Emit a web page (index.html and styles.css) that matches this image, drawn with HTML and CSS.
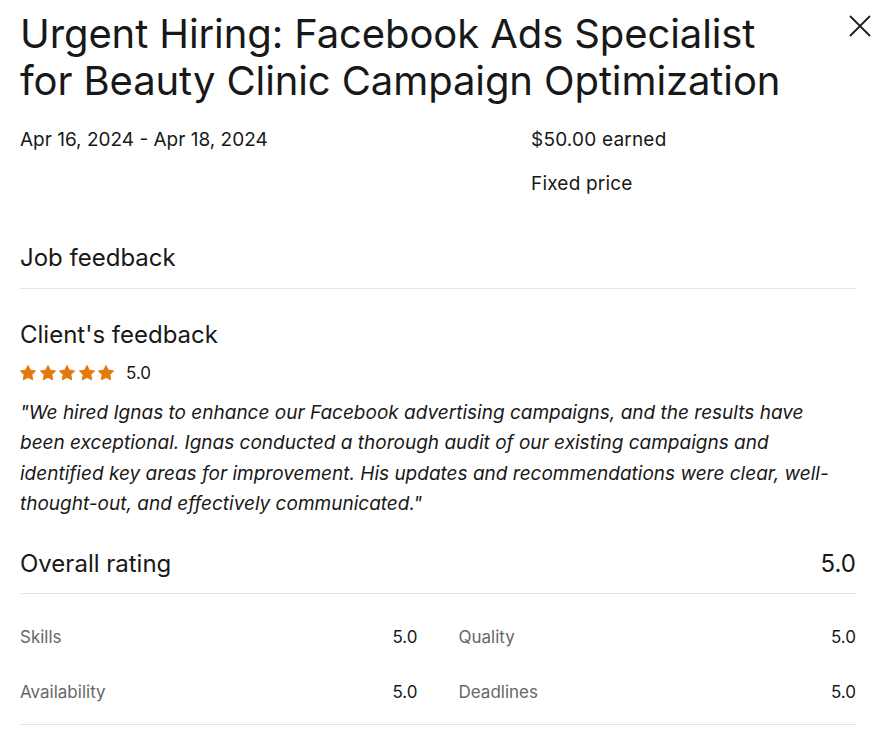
FILE: index.html
```html
<!DOCTYPE html>
<html>
<head>
<meta charset="utf-8">
<link rel="stylesheet" href="styles.css">
</head>
<body>
<div class="modal">
  <header class="head">
    <h1 class="title">Urgent Hiring: Facebook Ads Specialist for Beauty Clinic Campaign Optimization</h1>
    <button class="close" aria-label="Close">
      <svg width="22" height="22" viewBox="0 0 22 22"><path d="M1 1L21 21M21 1L1 21" stroke="#1f1f1f" stroke-width="1.8" fill="none"/></svg>
    </button>
  </header>
  <div class="meta">
    <div class="meta-left">Apr 16, 2024 - Apr 18, 2024</div>
    <div class="meta-right">
      <div>$50.00 earned</div>
      <div class="price-type">Fixed price</div>
    </div>
  </div>
  <h2 class="section">Job feedback</h2>
  <div class="client">
    <h3 class="client-title">Client's feedback</h3>
    <div class="stars-row">
      <span class="stars">
        <svg viewBox="0 0 20 20"><path d="M10 .5L12.94 6.45 19.51 7.41 14.76 12.05 15.88 18.59 10 15.5 4.12 18.59 5.24 12.05 .49 7.41 7.06 6.45Z"/></svg>
        <svg viewBox="0 0 20 20"><path d="M10 .5L12.94 6.45 19.51 7.41 14.76 12.05 15.88 18.59 10 15.5 4.12 18.59 5.24 12.05 .49 7.41 7.06 6.45Z"/></svg>
        <svg viewBox="0 0 20 20"><path d="M10 .5L12.94 6.45 19.51 7.41 14.76 12.05 15.88 18.59 10 15.5 4.12 18.59 5.24 12.05 .49 7.41 7.06 6.45Z"/></svg>
        <svg viewBox="0 0 20 20"><path d="M10 .5L12.94 6.45 19.51 7.41 14.76 12.05 15.88 18.59 10 15.5 4.12 18.59 5.24 12.05 .49 7.41 7.06 6.45Z"/></svg>
        <svg viewBox="0 0 20 20"><path d="M10 .5L12.94 6.45 19.51 7.41 14.76 12.05 15.88 18.59 10 15.5 4.12 18.59 5.24 12.05 .49 7.41 7.06 6.45Z"/></svg>
      </span>
      <span class="score">5.0</span>
    </div>
    <p class="quote">"We hired Ignas to enhance our Facebook advertising campaigns, and the results have been exceptional. Ignas conducted a thorough audit of our existing campaigns and identified key areas for improvement. His updates and recommendations were clear, well-thought-out, and effectively communicated."</p>
  </div>
  <div class="overall">
    <span>Overall rating</span>
    <span>5.0</span>
  </div>
  <div class="grid">
    <div class="cell"><span class="label">Skills</span><span class="val">5.0</span></div>
    <div class="cell"><span class="label">Quality</span><span class="val">5.0</span></div>
    <div class="cell"><span class="label">Availability</span><span class="val">5.0</span></div>
    <div class="cell"><span class="label">Deadlines</span><span class="val">5.0</span></div>
  </div>
</div>
</body>
</html>
```

FILE: styles.css
```css
html, body {
  margin: 0;
  padding: 0;
  background: #fff;
}
body {
  font-family: Inter, "Liberation Sans", Arial, sans-serif;
  color: #181818;
}
.modal {
  padding: 0 33px 0 20px;
}
.head {
  display: flex;
  justify-content: space-between;
  align-items: flex-start;
  padding-top: 10px;
}
.title {
  flex: 0 1 780px;
  margin: 0;
  font-size: 40px;
  line-height: 47px;
  font-weight: 400;
  letter-spacing: -0.1px;
}
.close {
  flex: none;
  border: 0;
  background: none;
  padding: 0;
  margin: 5px -15px 0 0;
  width: 22px;
  height: 22px;
  cursor: pointer;
}
.close svg { display: block; }
.meta {
  display: flex;
  margin-top: 25px;
  font-size: 19px;
  line-height: 22px;
}
.meta-left {
  width: 511px;
}
.meta-right {
  letter-spacing: 0.2px;
}
.price-type {
  margin-top: 22px;
}
.section {
  margin: 48px 0 0;
  font-size: 24px;
  font-weight: 400;
  line-height: 30px;
  padding-bottom: 15px;
  border-bottom: 1px solid #e4e4e4;
}
.client-title {
  margin: 31px 0 0;
  font-size: 24px;
  font-weight: 400;
  line-height: 30px;
}
.stars-row {
  display: flex;
  align-items: center;
  height: 20px;
  margin-top: 13px;
  font-size: 17px;
}
.stars {
  display: flex;
  gap: 3.5px;
}
.stars svg {
  display: block;
  width: 16px;
  height: 16px;
  fill: #e3790c;
  stroke: #e3790c;
  stroke-width: 1.2;
  stroke-linejoin: round;
}
.score {
  margin-left: 12px;
}
.quote {
  max-width: 830px;
  margin: 15px 0 0;
  font-style: italic;
  font-size: 19px;
  line-height: 30.3px;
}
.overall {
  display: flex;
  justify-content: space-between;
  margin-top: 30px;
  font-size: 24px;
  line-height: 30px;
  padding-bottom: 14px;
  border-bottom: 1px solid #e4e4e4;
}
.grid {
  display: grid;
  grid-template-columns: 1fr 1fr;
  column-gap: 41px;
  row-gap: 33px;
  padding: 32px 0 21px;
  border-bottom: 1px solid #e4e4e4;
}
.cell {
  display: flex;
  justify-content: space-between;
  font-size: 17px;
  line-height: 22px;
}
.label {
  color: #676767;
}
.val {
  color: #181818;
}
```
